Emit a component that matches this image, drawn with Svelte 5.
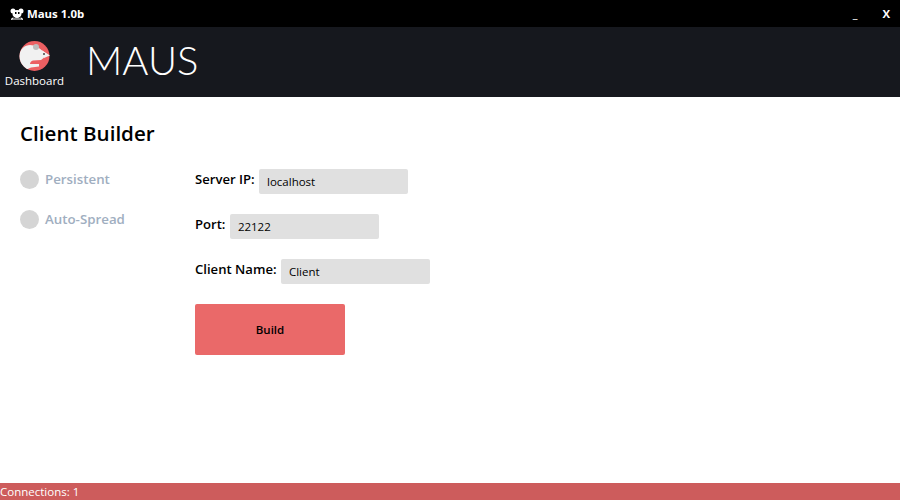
<script>
  let persistent = $state(false);
  let autoSpread = $state(false);
  let serverIp = $state("localhost");
  let port = $state("22122");
  let clientName = $state("Client");
  let connections = $state(1);
</script>

<div class="window">
  <div class="titlebar">
    <div class="title">
      <svg class="appicon" width="14" height="12" viewBox="0 0 14 12" aria-hidden="true">
        <circle cx="3" cy="3" r="2.5" fill="#fff" />
        <circle cx="11" cy="3" r="2.5" fill="#fff" />
        <ellipse cx="7" cy="6" rx="4.5" ry="4" fill="#fff" />
        <rect x="5" y="4" width="1.5" height="2" fill="#000" />
        <rect x="8" y="4" width="1.5" height="2" fill="#000" />
        <path d="M1 11h12M3 9.5 1.5 12M11 9.5l1.5 2.5" stroke="#fff" stroke-width="1" fill="none" />
      </svg>
      <span>Maus 1.0b</span>
    </div>
    <div class="controls">
      <span class="min">_</span>
      <span class="close">X</span>
    </div>
  </div>

  <header class="topbar">
    <div class="nav">
      <svg width="32" height="30" viewBox="0 0 32 30" aria-hidden="true">
        <defs>
          <clipPath id="disc"><circle cx="15.5" cy="15" r="15" /></clipPath>
        </defs>
        <circle cx="15.5" cy="15" r="15" fill="#ec5f62" />
        <g clip-path="url(#disc)">
          <path d="M0 14 C1 8 6 4 11 4 C16 4 20 7 24 10 L28 13 L24 17.5 L22 19 L14 19.5 C12 20 11 22 11 23 L20 23 L20 25.5 L12 26.5 L0 32 Z" fill="#f1f1f1" />
        </g>
        <path d="M23 9.5 L31 14.5 L25 17 Z" fill="#f1f1f1" />
        <circle cx="17" cy="6" r="3" fill="#bdbdbd" />
        <circle cx="25" cy="13" r="1" fill="#444" />
      </svg>
      <span>Dashboard</span>
    </div>
    <div class="logo">MAUS</div>
  </header>

  <main class="content">
    <h1>Client Builder</h1>
    <div class="columns">
      <div class="toggles">
        <button class="toggle" class:on={persistent} onclick={() => (persistent = !persistent)}>
          <i></i><span>Persistent</span>
        </button>
        <button class="toggle" class:on={autoSpread} onclick={() => (autoSpread = !autoSpread)}>
          <i></i><span>Auto-Spread</span>
        </button>
      </div>
      <form class="fields" onsubmit={(e) => e.preventDefault()}>
        <label>Server IP: <input bind:value={serverIp} /></label>
        <label>Port: <input bind:value={port} /></label>
        <label>Client Name: <input bind:value={clientName} /></label>
        <button class="build" type="submit">Build</button>
      </form>
    </div>
  </main>

  <footer class="status">Connections: {connections}</footer>
</div>

<style>
  :global(body) {
    margin: 0;
    background: #fff;
    color: #000;
    font-family: "Open Sans", "Noto Sans", sans-serif;
  }

  .window {
    height: 500px;
    display: flex;
    flex-direction: column;
    overflow: hidden;
  }

  .titlebar {
    height: 27px;
    flex: none;
    background: #000;
    color: #fff;
    display: flex;
    align-items: center;
    justify-content: space-between;
    padding: 0 10px;
    font-size: 11.4px;
    font-weight: 700;
  }

  .title {
    display: flex;
    align-items: center;
    gap: 3px;
  }

  .controls {
    display: flex;
    gap: 25px;
  }

  .topbar {
    height: 70px;
    flex: none;
    background: #16181e;
    color: #fff;
    display: flex;
  }

  .nav {
    width: 69px;
    display: flex;
    flex-direction: column;
    align-items: center;
    padding-top: 14px;
    box-sizing: border-box;
    font-size: 11.5px;
    line-height: 15px;
  }

  .nav svg {
    margin-bottom: 2px;
  }

  .logo {
    margin-left: 17px;
    font-family: Lato, sans-serif;
    font-weight: 300;
    font-size: 40px;
    line-height: 67px;
  }

  .content {
    flex: 1;
    padding: 20px;
    min-height: 0;
  }

  h1 {
    margin: 0 0 19px;
    font-size: 20.6px;
    line-height: 33px;
    font-weight: 600;
  }

  .columns {
    display: flex;
  }

  .toggles {
    width: 175px;
    display: flex;
    flex-direction: column;
    gap: 20px;
  }

  .toggle {
    display: flex;
    align-items: center;
    gap: 6px;
    padding: 0;
    border: 0;
    background: none;
    font: inherit;
    font-size: 13.3px;
    font-weight: 600;
    color: #a0aec0;
    height: 20px;
    cursor: pointer;
  }

  .toggle i {
    width: 19px;
    height: 19px;
    border-radius: 50%;
    background: #d5d5d5;
  }

  .toggle.on i {
    background: #ea6969;
  }

  .fields {
    display: flex;
    flex-direction: column;
    align-items: flex-start;
    gap: 20px;
  }

  label {
    font-size: 13.1px;
    font-weight: 600;
    height: 25px;
    line-height: 20px;
    white-space: nowrap;
  }

  input {
    width: 149px;
    height: 25px;
    box-sizing: border-box;
    margin-left: 1px;
    padding: 0 8px;
    border: 0;
    border-radius: 2px;
    background: #e0e0e0;
    font: inherit;
    font-size: 11.5px;
    font-weight: 400;
    vertical-align: top;
    color: #000;
    outline: none;
  }

  .build {
    width: 150px;
    height: 51px;
    border: 0;
    border-radius: 2px;
    background: #ea6969;
    color: #000;
    font: inherit;
    font-size: 11.5px;
    font-weight: 600;
    cursor: pointer;
  }

  .status {
    height: 17px;
    flex: none;
    background: #cd5c5c;
    color: #fff;
    font-size: 11.5px;
    font-weight: 500;
    line-height: 17px;
  }
</style>
